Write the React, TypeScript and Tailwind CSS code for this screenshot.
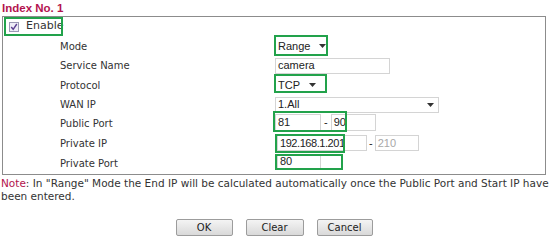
import React from 'react';

const labelFont = { fontFamily: '"DejaVu Sans", Verdana, sans-serif' };
const fieldFont = { fontFamily: '"Liberation Sans", Arial, sans-serif' };

function Caret() {
    return (
        <svg width="7" height="4" viewBox="0 0 7 4" className="shrink-0">
            <path d="M0 0 L7 0 L3.5 4 Z" fill="#333" />
        </svg>
    );
}

function GreenFrame({ className }: { className: string }) {
    return <div className={`pointer-events-none absolute border-2 border-[#22a24b] ${className}`} />;
}

function Input({ value, className, muted }: { value?: string; className: string; muted?: boolean }) {
    return (
        <div
            className={`flex items-center border border-[#d4d4d4] bg-white pl-[2px] text-[11px] leading-none ${muted ? 'text-[#a8a8a8]' : 'text-[#222]'} ${className}`}
            style={fieldFont}
        >
            {value}
        </div>
    );
}

const rows = [
    { label: 'Mode', h: 'h-[20px]' },
    { label: 'Service Name', h: 'h-[19px]' },
    { label: 'Protocol', h: 'h-[20px]' },
    { label: 'WAN IP', h: 'h-[19px]' },
    { label: 'Public Port', h: 'h-[19px]' },
    { label: 'Private IP', h: 'h-[20px]' },
    { label: 'Private Port', h: 'h-[20px]' },
];

function Field({ index }: { index: number }) {
    switch (index) {
        case 0:
            return (
                <div className="relative flex h-full items-center">
                    <div className="ml-[4px] flex w-[48px] items-center justify-between text-[11px] text-[#222]" style={fieldFont}>
                        <span>Range</span>
                        <Caret />
                    </div>
                    <GreenFrame className="left-0 top-[-1px] h-[21px] w-[54px]" />
                </div>
            );
        case 1:
            return (
                <div className="flex h-full items-center">
                    <Input value="camera" className="ml-[1px] h-[16px] w-[115px]" />
                </div>
            );
        case 2:
            return (
                <div className="relative flex h-full items-center">
                    <div className="ml-[4px] flex w-[38px] items-center justify-between text-[11px] text-[#222]" style={fieldFont}>
                        <span>TCP</span>
                        <Caret />
                    </div>
                    <GreenFrame className="left-0 top-[-1px] h-[19px] w-[53px]" />
                </div>
            );
        case 3:
            return (
                <div className="flex h-full items-center">
                    <div
                        className="ml-[1px] flex h-[16px] w-[164px] items-center justify-between border border-[#d4d4d4] bg-white pl-[2px] pr-[4px] text-[11px] text-[#222]"
                        style={fieldFont}
                    >
                        <span>1.All</span>
                        <Caret />
                    </div>
                </div>
            );
        case 4:
            return (
                <div className="relative flex h-full items-center">
                    <Input value="81" className="ml-[1px] mt-[-3px] h-[17px] w-[46px]" />
                    <span className="mx-[3px] mt-[-3px] text-[11px] text-[#222]" style={fieldFont}>-</span>
                    <Input value="90" className="mt-[-3px] h-[17px] w-[45px]" />
                    <GreenFrame className="left-[-1px] top-[-3px] h-[21px] w-[74px]" />
                </div>
            );
        case 5:
            return (
                <div className="relative flex h-full items-center">
                    <Input value="192.168.1.201" className="ml-[3px] h-[16px] w-[90px] tracking-[-0.04em]" />
                    <span className="mx-[2px] text-[11px] text-[#222]" style={fieldFont}>-</span>
                    <Input value="210" muted className="h-[16px] w-[44px]" />
                    <GreenFrame className="left-[1px] top-[1px] h-[19px] w-[70px]" />
                </div>
            );
        default:
            return (
                <div className="relative flex h-full items-center">
                    <Input value="80" className="ml-[3px] mt-[-4px] h-[15px] w-[44px]" />
                    <GreenFrame className="left-[1px] top-[1px] h-[16px] w-[68px]" />
                </div>
            );
    }
}

function Checkbox() {
    return (
        <svg width="10" height="10" viewBox="0 0 10 10" className="shrink-0">
            <rect x="0.5" y="0.5" width="9" height="9" fill="#eeecf7" stroke="#9a98b4" />
            <path d="M2.2 5 L4.2 7.3 L7.8 2" fill="none" stroke="#5b3f91" strokeWidth="1.4" />
        </svg>
    );
}

function Btn({ label, w }: { label: string; w: string }) {
    return (
        <button
            className={`flex h-[17px] items-center justify-center rounded-[2px] border border-[#9c9c9c] bg-gradient-to-b from-[#f4f4f4] to-[#d9d9d9] text-[10px] text-[#222] ${w}`}
            style={labelFont}
        >
            {label}
        </button>
    );
}

export default function App() {
    return (
        <div className="h-[240px] w-[550px] overflow-hidden bg-white">
            <div className="h-[16px] pl-[2px] pt-[1px] text-[11.5px] font-bold leading-[14px] text-[#b3134e]" style={fieldFont}>
                Index No. 1
            </div>
            <div className="ml-[2px] w-[544px] border border-[#8c8c8c] pb-[1px]">
                <div className="relative flex h-[19px] items-center pl-[6px]" style={labelFont}>
                    <Checkbox />
                    <span className="ml-[7px] text-[11px] text-[#333]">Enable</span>
                    <GreenFrame className="left-[1px] top-0 h-[19px] w-[59px]" />
                </div>
                {rows.map((row, i) => (
                    <div key={row.label} className={`grid grid-cols-[271px_1fr] ${row.h}`}>
                        <div className="flex items-center pl-[57px] text-[10px] text-[#333]" style={labelFont}>
                            {row.label}
                        </div>
                        <Field index={i} />
                    </div>
                ))}
            </div>
            <div className="mt-[2px] whitespace-nowrap pl-[1px] text-[10.5px] leading-[13px] text-[#333]" style={labelFont}>
                <span className="text-[#b3134e]">Note</span>: In "Range" Mode the End IP will be calculated automatically once the Public Port and Start IP have
                <br />
                been entered.
            </div>
            <div className="mt-[16px] flex justify-center gap-[13px] pr-[2px]">
                <Btn label="OK" w="w-[57px]" />
                <Btn label="Clear" w="w-[58px]" />
                <Btn label="Cancel" w="w-[56px]" />
            </div>
        </div>
    );
}
